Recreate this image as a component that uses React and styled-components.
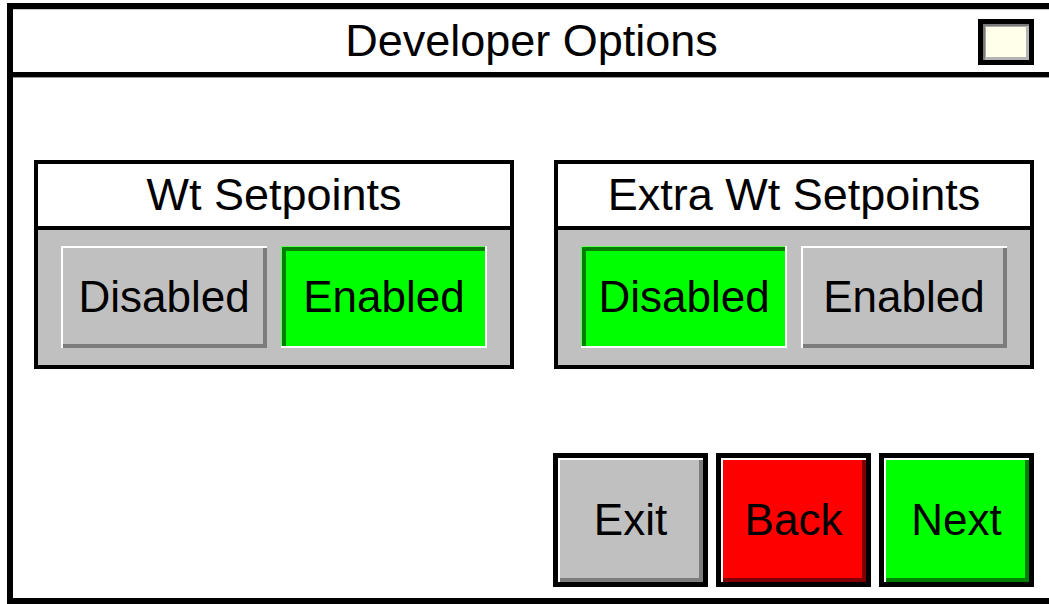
import styled, { createGlobalStyle } from "styled-components";

const GlobalStyle = createGlobalStyle`
  html, body {
    margin: 0;
    padding: 0;
    background: #fff;
    overflow: hidden;
  }
  body {
    font-family: "Liberation Sans", Arial, sans-serif;
    color: #000;
  }
`;

// the frame runs off the right edge of the screen, so no right border
const Screen = styled.div`
  box-sizing: border-box;
  margin: 3px 0 0 7px;
  width: 1043px;
  height: 601px;
  border: 6px solid #000;
  border-right: none;
  display: flex;
  flex-direction: column;
  background: #fff;
`;

const Header = styled.header`
  height: 63px;
  border-bottom: 5px solid #000;
  box-shadow: 0 1px 0 #9a9a9a, inset 0 1px 0 #c8c8c8;
  display: grid;
  grid-template-columns: 1fr auto 1fr;
  align-items: center;
`;

const Title = styled.h1`
  grid-column: 2;
  margin: 0;
  font-size: 45px;
  font-weight: 400;
  line-height: 1;
  white-space: nowrap;
`;

const StatusBox = styled.div`
  grid-column: 3;
  justify-self: end;
  margin: 3px 16px 0 0;
  box-sizing: border-box;
  width: 56px;
  height: 46px;
  border: 5px solid #000;
  background: #ffffea;
  box-shadow: inset 2px 2px 0 #7a7a7a, inset -3px -3px 0 #b4b4b4,
    inset 3px 3px 0 #a8a8a8;
`;

const Body = styled.main`
  flex: 1;
  padding: 83px 16px 11px 21px;
  display: flex;
  flex-direction: column;
  justify-content: space-between;
`;

const PanelRow = styled.div`
  display: flex;
  gap: 40px;
`;

const Panel = styled.section`
  box-sizing: border-box;
  width: 480px;
  height: 209px;
  border: 4px solid #000;
  display: flex;
  flex-direction: column;
`;

const PanelTitle = styled.h2`
  margin: 0;
  height: 62px;
  border-bottom: 4px solid #000;
  display: flex;
  align-items: center;
  justify-content: center;
  font-size: 45px;
  font-weight: 400;
  white-space: nowrap;
`;

const PanelBody = styled.div`
  flex: 1;
  background: #c0c0c0;
  padding: 16px 23px 17px;
  display: grid;
  grid-template-columns: 1fr 1fr;
  gap: 14px;
`;

const ToggleButton = styled.button`
  box-sizing: border-box;
  border: none;
  margin: 0;
  padding: 0;
  font-family: inherit;
  font-size: 44px;
  color: #000;
  background: ${(p) => (p.$active ? "#00ff00" : "#c0c0c0")};
  box-shadow: ${(p) =>
    p.$active
      ? "inset -2px -2px 0 #fff, inset 1px 1px 0 #5cff5c, inset 5px 5px 0 #008000"
      : "inset 2px 2px 0 #fff, inset -4px -4px 0 #7c7c7c"};
`;

const NavRow = styled.div`
  display: flex;
  justify-content: flex-end;
  gap: 8px;
`;

const shades = {
  gray: ["#c0c0c0", "#7c7c7c"],
  red: ["#ff0000", "#800000"],
  green: ["#00ff00", "#008000"],
};

const NavButton = styled.button`
  box-sizing: border-box;
  width: 155px;
  height: 134px;
  margin: 0;
  padding: 0;
  border: 5px solid #000;
  font-family: inherit;
  font-size: 44px;
  color: #000;
  background: ${(p) => shades[p.$tone][0]};
  box-shadow: inset 2px 2px 0 #fff, inset -4px -4px 0 ${(p) => shades[p.$tone][1]};
`;

const toggles = [
  { title: "Wt Setpoints", enabled: true },
  { title: "Extra Wt Setpoints", enabled: false },
];

export default function App() {
  return (
    <>
      <GlobalStyle />
      <Screen>
        <Header>
          <Title>Developer Options</Title>
          <StatusBox />
        </Header>
        <Body>
          <PanelRow>
            {toggles.map((t) => (
              <Panel key={t.title}>
                <PanelTitle>{t.title}</PanelTitle>
                <PanelBody>
                  <ToggleButton $active={!t.enabled}>Disabled</ToggleButton>
                  <ToggleButton $active={t.enabled}>Enabled</ToggleButton>
                </PanelBody>
              </Panel>
            ))}
          </PanelRow>
          <NavRow>
            <NavButton $tone="gray">Exit</NavButton>
            <NavButton $tone="red">Back</NavButton>
            <NavButton $tone="green">Next</NavButton>
          </NavRow>
        </Body>
      </Screen>
    </>
  );
}
